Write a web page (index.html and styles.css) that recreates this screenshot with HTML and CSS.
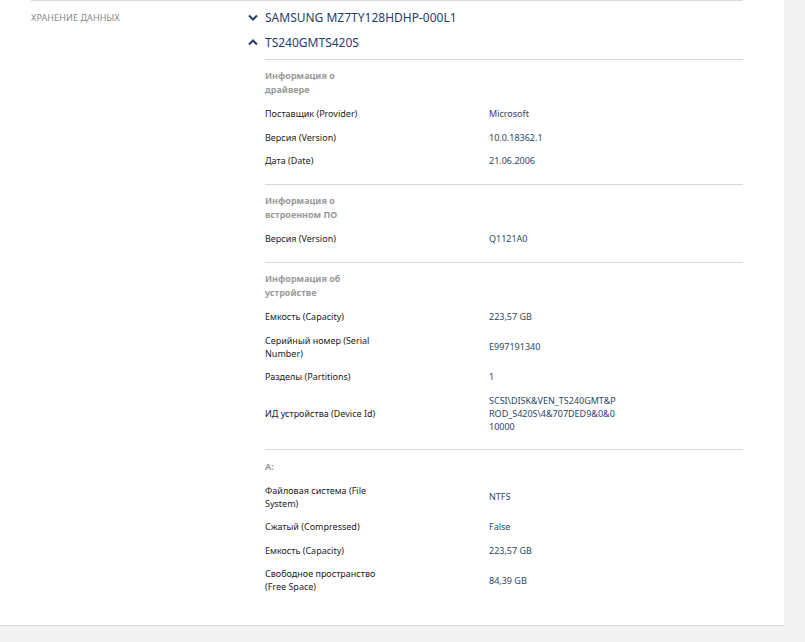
FILE: index.html
```html
<!DOCTYPE html>
<html lang="ru">
<head>
<meta charset="utf-8">
<link rel="stylesheet" href="styles.css">
</head>
<body>
<div class="panel">
  <div class="section">
    <div class="section-label">Хранение данных</div>
    <div class="section-body">
      <div class="device">
        <svg class="chev" width="10" height="7" viewBox="0 0 10 7"><path d="M1 1.5 L5 5.5 L9 1.5" fill="none" stroke="#1f3f66" stroke-width="2"/></svg>
        <span>SAMSUNG MZ7TY128HDHP-000L1</span>
      </div>
      <div class="device">
        <svg class="chev" width="10" height="7" viewBox="0 0 10 7"><path d="M1 5.5 L5 1.5 L9 5.5" fill="none" stroke="#1f3f66" stroke-width="2"/></svg>
        <span>TS240GMTS420S</span>
      </div>
      <div class="details">
        <div class="group">
          <div class="group-title">Информация о драйвере</div>
          <div class="row"><div class="label">Поставщик (Provider)</div><div class="value">Microsoft</div></div>
          <div class="row"><div class="label">Версия (Version)</div><div class="value">10.0.18362.1</div></div>
          <div class="row"><div class="label">Дата (Date)</div><div class="value">21.06.2006</div></div>
        </div>
        <div class="group">
          <div class="group-title">Информация о встроенном ПО</div>
          <div class="row"><div class="label">Версия (Version)</div><div class="value">Q1121A0</div></div>
        </div>
        <div class="group">
          <div class="group-title">Информация об устройстве</div>
          <div class="row"><div class="label">Емкость (Capacity)</div><div class="value">223,57 GB</div></div>
          <div class="row"><div class="label">Серийный номер (Serial Number)</div><div class="value">E997191340</div></div>
          <div class="row"><div class="label">Разделы (Partitions)</div><div class="value">1</div></div>
          <div class="row"><div class="label">ИД устройства (Device Id)</div><div class="value">SCSI\DISK&amp;VEN_TS240GMT&amp;P<br>ROD_S420S\4&amp;707DED9&amp;0&amp;0<br>10000</div></div>
        </div>
        <div class="group">
          <div class="group-title">A:</div>
          <div class="row"><div class="label">Файловая система (File System)</div><div class="value">NTFS</div></div>
          <div class="row"><div class="label">Сжатый (Compressed)</div><div class="value">False</div></div>
          <div class="row"><div class="label">Емкость (Capacity)</div><div class="value">223,57 GB</div></div>
          <div class="row"><div class="label">Свободное пространство (Free Space)</div><div class="value">84,39 GB</div></div>
        </div>
      </div>
    </div>
  </div>
</div>
</body>
</html>
```
FILE: styles.css
```css
html, body {
  margin: 0;
  padding: 0;
}
body {
  background: #f2f2f2;
  font-family: "Noto Sans", "Open Sans", sans-serif;
  color: #222;
  width: 805px;
  height: 642px;
  overflow: hidden;
}
.panel {
  width: 784px;
  height: 626px;
  background: #fff;
  border-bottom: 1px solid #d6d6d6;
  padding: 0 41px 0 31px;
  box-sizing: border-box;
}
.section {
  border-top: 1px solid #dcdcdc;
  display: flex;
}
.section-label {
  width: 217px;
  flex: none;
  font-size: 9px;
  line-height: 25px;
  padding-top: 4px;
  text-transform: uppercase;
  color: #8a8a8a;
  letter-spacing: 0.1px;
}
.section-body {
  flex: 1;
  padding-top: 4px;
}
.device {
  display: flex;
  align-items: center;
  height: 25px;
  font-size: 12px;
  color: #1f3f66;
}
.chev {
  width: 10px;
  margin-right: 7px;
  flex: none;
}
.details {
  margin-left: 17px;
  margin-top: 4px;
}
.group {
  border-top: 1px solid #d8d8d8;
  padding: 9px 0 11px;
}
.group + .group {
  padding-top: 9.5px;
}
.group-title {
  font-size: 9px;
  line-height: 14px;
  font-weight: 700;
  color: #9a9a9a;
  width: 80px;
  margin-bottom: 5px;
}
.row {
  display: flex;
  align-items: center;
  padding: 5.25px 0;
  font-size: 9px;
  line-height: 13px;
}
.label {
  width: 128px;
  flex: none;
  color: #222;
}
.value {
  margin-left: 96px;
  color: #2a4766;
}
```
